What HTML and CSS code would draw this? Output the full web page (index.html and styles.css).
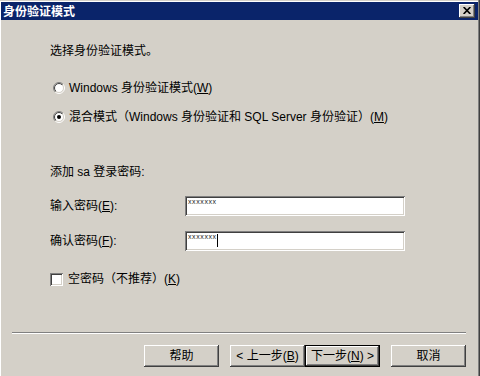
FILE: index.html
```html
<!DOCTYPE html>
<html lang="zh-CN">
<head>
<meta charset="utf-8">
<title>身份验证模式</title>
<link rel="stylesheet" href="styles.css">
</head>
<body>
<div class="window">
  <div class="titlebar">
    <span class="title">身份验证模式</span>
    <button class="close" type="button" aria-label="关闭">
      <svg width="8" height="7" viewBox="0 0 8 7"><path d="M0.6 0 L7.4 7 M7.4 0 L0.6 7" stroke="#000" stroke-width="1.7" fill="none"/></svg>
    </button>
  </div>
  <div class="main">
    <div class="form">
      <div class="row intro">选择身份验证模式。</div>
      <div class="row radio r1">
        <svg class="rb" width="12" height="12" viewBox="0 0 12 12">
          <defs>
            <linearGradient id="ro1" x1="0" y1="0" x2="1" y2="1"><stop offset="0.5" stop-color="#808080"/><stop offset="0.5" stop-color="#ffffff"/></linearGradient>
            <linearGradient id="ri1" x1="0" y1="0" x2="1" y2="1"><stop offset="0.5" stop-color="#404040"/><stop offset="0.5" stop-color="#d4d0c8"/></linearGradient>
          </defs>
          <circle cx="6" cy="6" r="5.5" fill="none" stroke="url(#ro1)"/>
          <circle cx="6" cy="6" r="4.5" fill="#fff" stroke="url(#ri1)"/>
        </svg>
        <span>Windows 身份验证模式(<u>W</u>)</span>
      </div>
      <div class="row radio r2">
        <svg class="rb" width="12" height="12" viewBox="0 0 12 12">
          <defs>
            <linearGradient id="ro2" x1="0" y1="0" x2="1" y2="1"><stop offset="0.5" stop-color="#808080"/><stop offset="0.5" stop-color="#ffffff"/></linearGradient>
            <linearGradient id="ri2" x1="0" y1="0" x2="1" y2="1"><stop offset="0.5" stop-color="#404040"/><stop offset="0.5" stop-color="#d4d0c8"/></linearGradient>
          </defs>
          <circle cx="6" cy="6" r="5.5" fill="none" stroke="url(#ro2)"/>
          <circle cx="6" cy="6" r="4.5" fill="#fff" stroke="url(#ri2)"/>
          <circle cx="6" cy="6" r="2" fill="#000"/>
        </svg>
        <span>混合模式（Windows 身份验证和 SQL Server 身份验证）(<u>M</u>)</span>
      </div>
      <div class="row heading">添加 sa 登录密码:</div>
      <div class="row field f1">
        <span class="label">输入密码(<u>E</u>):</span>
        <div class="input"><span class="mask">xxxxxxx</span></div>
      </div>
      <div class="row field f2">
        <span class="label">确认密码(<u>F</u>):</span>
        <div class="input"><span class="mask">xxxxxxx</span><span class="caret"></span></div>
      </div>
      <div class="row check">
        <span class="box"></span>
        <span>空密码（不推荐）(<u>K</u>)</span>
      </div>
    </div>
    <div class="sep"></div>
    <div class="buttons">
      <button class="btn help" type="button">帮助</button>
      <button class="btn back" type="button">&lt; 上一步(<u>B</u>)</button>
      <button class="btn next default" type="button">下一步(<u>N</u>) &gt;</button>
      <button class="btn cancel" type="button">取消</button>
    </div>
  </div>
</div>
</body>
</html>
```

FILE: styles.css
```css
* { box-sizing: border-box; }
html, body { margin: 0; padding: 0; }
body {
  width: 480px;
  height: 376px;
  overflow: hidden;
  background: #d4d0c8;
  font-family: "Liberation Sans", "Noto Sans CJK SC", sans-serif;
  font-size: 12px;
  color: #000;
}
.window {
  width: 480px;
  height: 376px;
  background: #d4d0c8;
  padding: 2px 2px 0 1px;
  box-shadow: inset -1px 0 #404040, inset -2px 0 #808080, inset 0 1px #d4d0c8, inset 0 2px #fff, inset 1px 0 #fff;
}
.titlebar {
  height: 18px;
  background: #0a246a;
  display: flex;
  align-items: center;
  justify-content: space-between;
  padding: 0 3px 0 2px;
}
.title {
  color: #fff;
  font-family: "Noto Sans CJK SC", sans-serif;
  font-weight: bold;
  font-size: 12px;
  line-height: 18px;
}
.close {
  width: 16px;
  height: 14px;
  border: 0;
  padding: 0 1px 1px 0;
  margin: 0;
  background: #d4d0c8;
  display: flex;
  align-items: center;
  justify-content: center;
  box-shadow: inset -1px -1px #404040, inset 1px 1px #fff, inset -2px -2px #808080;
}
.close svg { display: block; }
.main {
  padding: 0 12px 0 11px;
}
.form {
  padding-left: 38px;
}
.row {
  display: flex;
  align-items: center;
  height: 14px;
  line-height: 14px;
  white-space: nowrap;
}
.intro { margin-top: 24px; }
.r1 { margin-top: 23px; }
.r2 { margin-top: 15px; }
.rb { display: block; margin: 0 4px 0 3px; flex: none; }
.heading { margin-top: 41px; }
.field { height: 20px; }
.f1 { margin-top: 17px; }
.f2 { margin-top: 15px; }
.label { width: 135px; flex: none; }
.input {
  width: 220px;
  height: 20px;
  background: #fff;
  box-shadow: inset 1px 1px #808080, inset -1px -1px #fff, inset 2px 2px #404040, inset -2px -2px #d4d0c8;
  display: flex;
  align-items: flex-start;
  padding: 2px 0 0 3px;
}
.mask {
  font-family: "Liberation Sans", sans-serif;
  font-size: 7px;
  line-height: 7px;
  letter-spacing: 0.6px;
  color: #222;
}
.caret {
  display: inline-block;
  width: 1px;
  height: 13px;
  margin-top: 1px;
  background: #000;
}
.check { margin-top: 21px; }
.box {
  width: 13px;
  height: 13px;
  flex: none;
  margin-right: 5px;
  background: #fff;
  box-shadow: inset 1px 1px #808080, inset -1px -1px #fff, inset 2px 2px #404040, inset -2px -2px #d4d0c8;
}
.sep {
  margin-top: 46px;
  height: 2px;
  border-top: 1px solid #808080;
  border-bottom: 1px solid #fff;
}
.buttons {
  margin-top: 11px;
  display: flex;
  justify-content: flex-end;
}
.btn {
  width: 75px;
  height: 22px;
  margin: 0;
  padding: 0;
  border: 0;
  background: #d4d0c8;
  font-family: "Liberation Sans", "Noto Sans CJK SC", sans-serif;
  font-size: 12px;
  line-height: 20px;
  color: #000;
  box-shadow: inset -1px -1px #404040, inset 1px 1px #fff, inset -2px -2px #808080, inset 2px 2px #d4d0c8;
}
.btn.default { border: 1px solid #000; line-height: 18px; }
.help { margin-right: 11px; }
.next { margin-right: 11px; }
```
